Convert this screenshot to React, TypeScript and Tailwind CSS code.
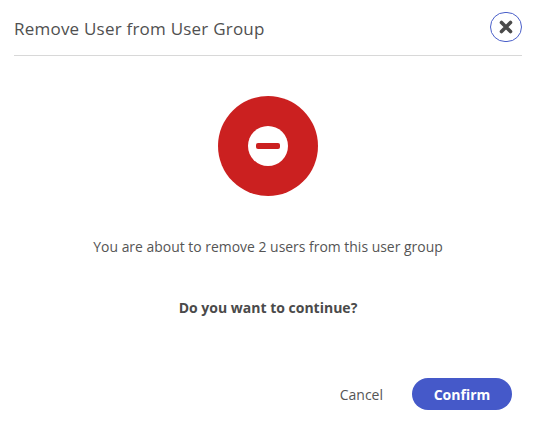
export default function App() {
  return (
    <div className="w-[538px] h-[427px] bg-white font-['Open_Sans',sans-serif] text-[#555] overflow-hidden">
      <div className="mx-[14px] w-[508px] h-[56px] border-b border-[#d8d8d8] flex items-center justify-between">
        <h1 className="text-[17px] font-medium tracking-[0.22px] leading-none mt-[2px] text-[#505050]">Remove User from User Group</h1>
        <button className="w-[32px] h-[30px] rounded-full border border-[#4a5fc9] flex items-center justify-center mt-[-1px]">
          <svg width="14" height="14" viewBox="0 0 14 14">
            <path d="M2.5 2.5L11.5 11.5M11.5 2.5L2.5 11.5" stroke="#4a4a4a" strokeWidth="3.6" strokeLinecap="round" />
          </svg>
        </button>
      </div>
      <div className="w-[536px]">
        <div className="flex justify-center mt-[40px]">
          <div className="w-[100px] h-[100px] rounded-full bg-[#cb2020] flex items-center justify-center">
            <div className="w-[40px] h-[40px] rounded-full bg-white flex items-center justify-center">
              <div className="w-[24px] h-[6px] rounded-[2px] bg-[#cb2020]"></div>
            </div>
          </div>
        </div>
        <p className="mt-[41px] text-center text-[13.95px] leading-[20px] text-[#555]">You are about to remove 2 users from this user group</p>
        <p className="mt-[41px] text-center text-[14px] leading-[20px] font-bold text-[#4a4a4a]">Do you want to continue?</p>
      </div>
      <div className="mt-[60px] flex items-center justify-end pr-[26px] gap-[29px]">
        <button className="text-[14px] text-[#555]">Cancel</button>
        <button className="w-[100px] h-[32px] rounded-full bg-[#4559c9] text-white text-[14px] font-bold">Confirm</button>
      </div>
    </div>
  );
}
